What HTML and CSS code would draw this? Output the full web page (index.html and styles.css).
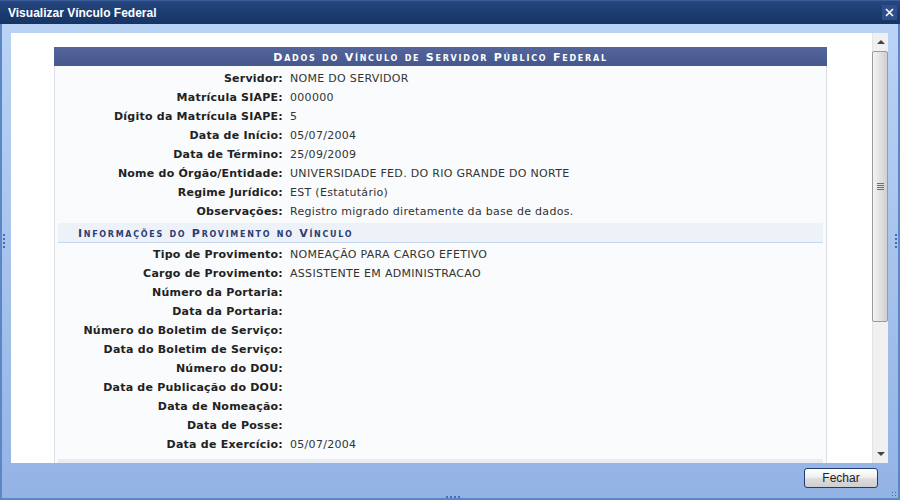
FILE: index.html
```html
<!DOCTYPE html>
<html lang="pt-BR">
<head>
  <meta charset="UTF-8" />
  <title>Visualizar Vínculo Federal</title>
  <link rel="stylesheet" href="styles.css">
</head>
<body>
  <div class="window">
    <div class="titlebar">
      <span class="title">Visualizar Vínculo Federal</span>
      <button class="close">
        <svg width="9" height="9" viewBox="0 0 9 9"><path d="M1 1 L8 8 M8 1 L1 8" stroke="#fff" stroke-width="1.6"/></svg>
      </button>
    </div>

    <div class="body">
      <div class="frame">
        <div class="content">
          <div class="panel">
            <div class="panel-head">Dados do Vínculo de Servidor Público Federal</div>
            <div class="panel-body">
              <div class="row"><span class="label">Servidor:</span><span class="value">NOME DO SERVIDOR</span></div>
              <div class="row"><span class="label">Matrícula SIAPE:</span><span class="value">000000</span></div>
              <div class="row"><span class="label">Dígito da Matrícula SIAPE:</span><span class="value">5</span></div>
              <div class="row"><span class="label">Data de Início:</span><span class="value">05/07/2004</span></div>
              <div class="row"><span class="label">Data de Término:</span><span class="value">25/09/2009</span></div>
              <div class="row"><span class="label">Nome do Órgão/Entidade:</span><span class="value">UNIVERSIDADE FED. DO RIO GRANDE DO NORTE</span></div>
              <div class="row"><span class="label">Regime Jurídico:</span><span class="value">EST (Estatutário)</span></div>
              <div class="row"><span class="label">Observações:</span><span class="value">Registro migrado diretamente da base de dados.</span></div>

              <div class="subhead">Informações do Provimento no Vínculo</div>

              <div class="row"><span class="label">Tipo de Provimento:</span><span class="value">NOMEAÇÃO PARA CARGO EFETIVO</span></div>
              <div class="row"><span class="label">Cargo de Provimento:</span><span class="value">ASSISTENTE EM ADMINISTRACAO</span></div>
              <div class="row"><span class="label">Número da Portaria:</span><span class="value"></span></div>
              <div class="row"><span class="label">Data da Portaria:</span><span class="value"></span></div>
              <div class="row"><span class="label">Número do Boletim de Serviço:</span><span class="value"></span></div>
              <div class="row"><span class="label">Data do Boletim de Serviço:</span><span class="value"></span></div>
              <div class="row"><span class="label">Número do DOU:</span><span class="value"></span></div>
              <div class="row"><span class="label">Data de Publicação do DOU:</span><span class="value"></span></div>
              <div class="row"><span class="label">Data de Nomeação:</span><span class="value"></span></div>
              <div class="row"><span class="label">Data de Posse:</span><span class="value"></span></div>
              <div class="row"><span class="label">Data de Exercício:</span><span class="value">05/07/2004</span></div>
              <div class="panel-foot"></div>
            </div>
          </div>
        </div>

        <div class="scrollbar">
          <div class="arrow up"></div>
          <div class="track">
            <div class="thumb"><span class="grip"></span></div>
          </div>
          <div class="arrow down"></div>
        </div>
      </div>

      <div class="footer">
        <button class="btn">Fechar</button>
      </div>
    </div>

    <span class="dots dots-left"></span>
    <span class="dots dots-right"></span>
    <span class="dots dots-bottom"></span>
    <span class="resize-grip"></span>
  </div>
</body>
</html>
```

FILE: styles.css
```css
* {
  box-sizing: border-box;
  margin: 0;
  padding: 0;
}

body {
  width: 900px;
  height: 500px;
  overflow: hidden;
  font-family: 'DejaVu Sans', Verdana, sans-serif;
  font-size: 11px;
}

.window {
  width: 900px;
  height: 500px;
  display: flex;
  flex-direction: column;
  position: relative;
  background: linear-gradient(#bcd5f6, #94b3e5);
  border-left: 2px solid #5d86c6;
  border-right: 2px solid #5d86c6;
  border-bottom: 2px solid #5d86c6;
}

.titlebar {
  height: 24px;
  margin: 0 -2px;
  background: linear-gradient(#25467f, #1a3a6e 60%, #173464);
  border-top: 1px solid #3a5d98;
  display: flex;
  align-items: center;
  justify-content: space-between;
  padding: 0 3px 0 8px;
}

.title {
  color: #fff;
  font-family: 'Liberation Sans', Arial, sans-serif;
  font-weight: bold;
  font-size: 12px;
}

.close {
  width: 15px;
  height: 15px;
  border: none;
  background: #2d4f8c;
  display: flex;
  align-items: center;
  justify-content: center;
}

.body {
  flex: 1;
  display: flex;
  flex-direction: column;
  padding: 9px 10px 0 9px;
}

.frame {
  height: 430px;
  background: #fff;
  display: flex;
}

.content {
  flex: 1;
  overflow: hidden;
  padding: 14px 45px 0 43px;
}

.panel-head {
  height: 19px;
  line-height: 21px;
  background: linear-gradient(#54659b, #45578d);
  color: #fff;
  font-weight: bold;
  font-variant: small-caps;
  letter-spacing: 1.75px;
  text-align: center;
  font-size: 11px;
}

.panel-body {
  background: #f9fbfd;
  border-left: 1px solid #dcdfe6;
  border-right: 1px solid #dcdfe6;
  padding: 1px 3px 0;
}

.row {
  display: flex;
  height: 19px;
  padding-top: 3px;
  align-items: center;
}

.label {
  width: 232px;
  text-align: right;
  font-weight: bold;
  letter-spacing: 0.23px;
  color: #222;
  padding-right: 7px;
}

.value {
  color: #333;
  letter-spacing: 0.3px;
}

.subhead {
  margin-top: 4px;
  height: 20px;
  line-height: 21px;
  background: #edf2f9;
  border-bottom: 1px solid #c5d6ef;
  color: #2d3d73;
  font-weight: bold;
  font-variant: small-caps;
  letter-spacing: 1.7px;
  padding-left: 20px;
}

.panel-foot {
  margin-top: 7px;
  height: 10px;
  background: #e9edf3;
}

.scrollbar {
  width: 16px;
  display: flex;
  flex-direction: column;
  background: #f0f0f0;
  border-left: 1px solid #e4e4e4;
}

.arrow {
  height: 18px;
  position: relative;
}

.arrow::after {
  content: "";
  position: absolute;
  left: 4px;
  border-left: 4px solid transparent;
  border-right: 4px solid transparent;
}

.arrow.up::after {
  top: 7px;
  border-bottom: 4px solid #444;
}

.arrow.down::after {
  top: 7px;
  border-top: 4px solid #444;
}

.track {
  flex: 1;
}

.thumb {
  height: 271px;
  margin: 0 0 0 -1px;
  border: 1px solid #9a9a9a;
  border-radius: 2px;
  background: linear-gradient(90deg, #f4f4f4, #e2e2e2 50%, #cfcfcf);
  display: flex;
  align-items: center;
  justify-content: center;
}

.grip {
  width: 7px;
  height: 7px;
  background: repeating-linear-gradient(#6e6e6e 0 1px, transparent 1px 2px);
}

.footer {
  flex: 1;
  display: flex;
  justify-content: flex-end;
  align-items: flex-start;
  padding: 5px 10px 0 0;
}

.btn {
  width: 74px;
  height: 20px;
  border: 1px solid #1c3e72;
  border-radius: 3px;
  background: linear-gradient(#ffffff, #f0f0f0 45%, #dcdcdc 55%, #cfcfcf);
  font-family: 'Liberation Sans', Arial, sans-serif;
  font-size: 12px;
  color: #222;
}

.dots {
  position: absolute;
  background: repeating-linear-gradient(#3d6fc0 0 2px, transparent 2px 4px);
}

.dots-left {
  left: 1px;
  top: 234px;
  width: 2px;
  height: 14px;
}

.dots-right {
  right: 1px;
  top: 234px;
  width: 2px;
  height: 14px;
}

.dots-bottom {
  left: 444px;
  bottom: 0;
  width: 14px;
  height: 2px;
  background: repeating-linear-gradient(90deg, #3d6fc0 0 2px, transparent 2px 4px);
}

.resize-grip {
  position: absolute;
  right: 1px;
  bottom: 1px;
  width: 6px;
  height: 6px;
  background: radial-gradient(circle, #3d6fc0 0.8px, transparent 1px) 0 0 / 3px 3px;
}
```
